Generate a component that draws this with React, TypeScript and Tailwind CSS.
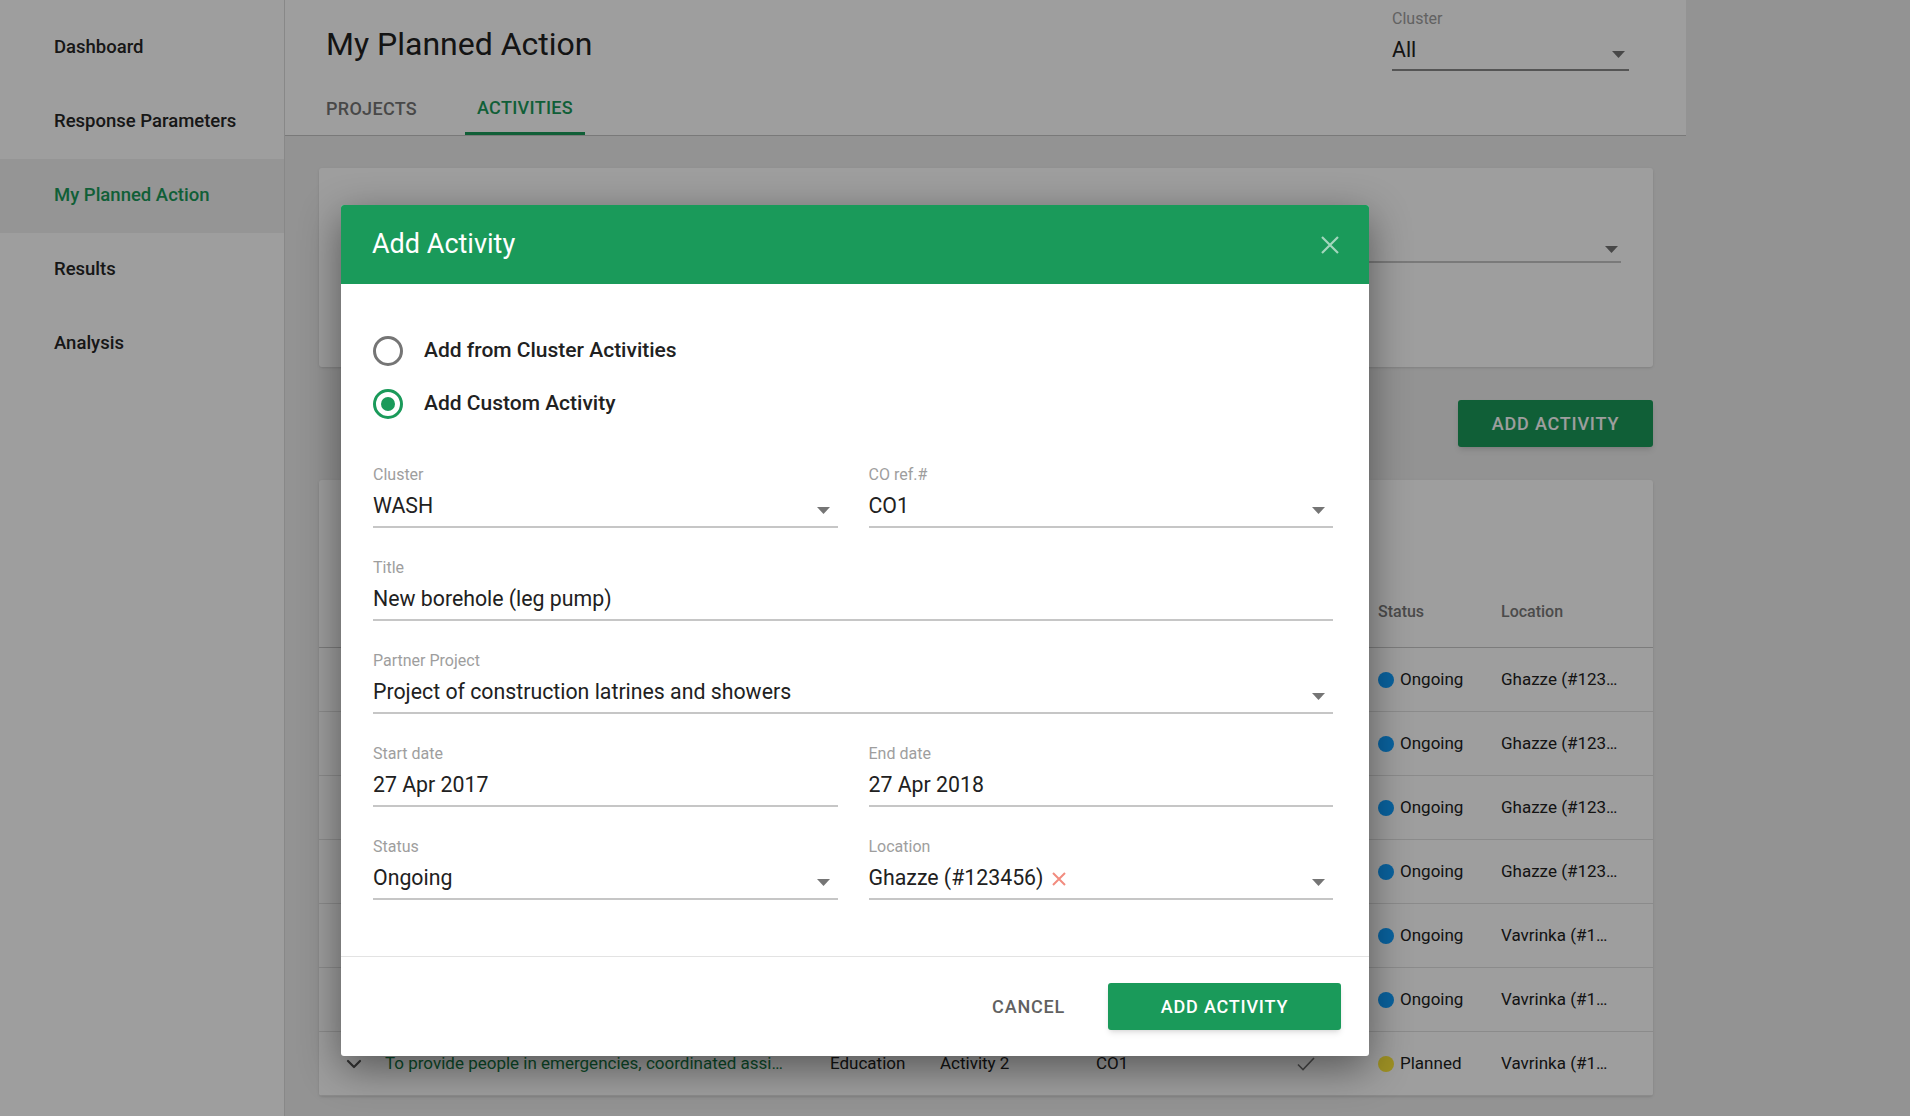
import { ChevronDown } from "lucide-react";

const navItems = ["Dashboard", "Response Parameters", "My Planned Action", "Results", "Analysis"];

// rows behind the modal only show status + location; the last one is fully visible
const rows = [
    { status: "Ongoing", location: "Ghazze (#123…" },
    { status: "Ongoing", location: "Ghazze (#123…" },
    { status: "Ongoing", location: "Ghazze (#123…" },
    { status: "Ongoing", location: "Ghazze (#123…" },
    { status: "Ongoing", location: "Vavrinka (#1…" },
    { status: "Ongoing", location: "Vavrinka (#1…" },
];

const cols = "grid grid-cols-[66px_445px_110px_156px_194px_88px_123px_1fr] items-center";

function Arrow({ right = "mr-[8px]", top = "mt-[8px]" }: { right?: string; top?: string }) {
    return (
        <svg width="13" height="7" viewBox="0 0 13 7" className={"ml-auto shrink-0 " + right + " " + top}>
            <path d="M0 0 L13 0 L6.5 7 Z" fill="#757575"/>
        </svg>
    );
}

function Field({ label, value, select, extra }: { label: string; value: string; select?: boolean; extra?: React.ReactNode }) {
    return (
        <div>
            <div className="h-[18px] leading-[18px] text-[16px] text-[#9e9e9e]">{label}</div>
            <div className="mt-[10px] pb-[8px] border-b-2 border-[#c6c6c6] flex items-center">
                <span className="h-[24px] leading-[24px] text-[21.3px] text-[#212121] whitespace-nowrap">{value}</span>
                {extra}
                {select && <Arrow/>}
            </div>
        </div>
    );
}

function Radio({ checked, label }: { checked?: boolean; label: string }) {
    return (
        <div className="h-[38px] flex items-center gap-[21px]">
            <div
                className={
                    checked
                        ? "w-[30px] h-[30px] rounded-full border-[3px] border-[#1a9a5a] flex items-center justify-center"
                        : "w-[30px] h-[30px] rounded-full border-[3px] border-[#757575]"
                }
            >
                {checked && <div className="w-[14px] h-[14px] rounded-full bg-[#1a9a5a]"/>}
            </div>
            <span className="text-[21px] font-medium text-[#212121]">{label}</span>
        </div>
    );
}

function StatusCell({ status }: { status: string }) {
    return (
        <div className="flex items-center gap-[6px]">
            <span
                className={
                    status === "Planned"
                        ? "w-[16px] h-[16px] rounded-full bg-[#fde93b]"
                        : "w-[16px] h-[16px] rounded-full bg-[#109eff]"
                }
            />
            {status}
        </div>
    );
}

export default function App() {
    return (
        <div className="relative h-screen w-full overflow-hidden bg-[#ededed] font-['Roboto',sans-serif] flex">
            {/* Sidebar */}
            <aside className="w-[285px] shrink-0 bg-white border-r border-[#dcdcdc] pt-[11px]">
                {navItems.map((item) => (
                    <div
                        key={item}
                        className={
                            item === "My Planned Action"
                                ? "h-[74px] flex items-center pl-[54px] text-[18.5px] font-medium text-[#1a9a5a] bg-[#f0f0f0]"
                                : "h-[74px] flex items-center pl-[54px] text-[18.5px] font-medium text-[#262626]"
                        }
                    >
                        {item}
                    </div>
                ))}
            </aside>

            <main className="w-[1401px] shrink-0 flex flex-col">
                {/* Header */}
                <header className="bg-white border-b border-[#c4c4c4] h-[136px]">
                    <div className="h-[79px] flex justify-between pl-[41px] pr-[57px]">
                        <h1 className="mt-[25px] h-[38px] leading-[38px] text-[32px] text-[#212121]">My Planned Action</h1>
                        <div className="mt-[10px] w-[237px]">
                            <div className="h-[18px] leading-[18px] text-[16px] text-[#9e9e9e]">Cluster</div>
                            <div className="mt-[10px] pb-[7px] border-b-2 border-[#8a8a8a] flex items-center">
                                <span className="h-[24px] leading-[24px] text-[21.3px] text-[#212121]">All</span>
                                <Arrow right="mr-[4px]"/>
                            </div>
                        </div>
                    </div>
                    <div className="h-[56px] flex pl-[41px]">
                        <div className="flex items-center pt-[2px] text-[18px] font-medium tracking-[0.3px] text-[#757575]">PROJECTS</div>
                        <div className="ml-[48px] px-[12px] pt-[3px] flex items-center border-b-[3px] border-[#1a9a5a] text-[18px] font-medium tracking-[0.3px] text-[#1a9a5a]">
                            ACTIVITIES
                        </div>
                    </div>
                </header>

                {/* Content */}
                <div className="pl-[34px] pr-[33px] pt-[32px]">
                    <div className="h-[199px] bg-white rounded-[3px] shadow-sm px-[32px] pt-[64px] flex justify-end">
                        <div className="w-[402px] h-[31px] border-b-2 border-[#c6c6c6] flex">
                            <Arrow right="mr-[3px]" top="mt-[14px]"/>
                        </div>
                    </div>

                    <div className="mt-[33px] flex justify-end">
                        <button className="h-[47px] w-[195px] bg-[#1a9a5a] rounded-[3px] shadow-md text-white text-[18px] font-medium tracking-[0.8px]">
                            ADD ACTIVITY
                        </button>
                    </div>

                    <div className="mt-[33px] bg-white rounded-[3px] shadow-sm">
                        <div className="h-[96px]"/>
                        <div className={cols + " h-[72px] border-b border-[#c8c8c8] text-[16px] font-medium text-[#7a7a7a]"}>
                            <div className="col-start-7">Status</div>
                            <div>Location</div>
                        </div>
                        {rows.map((r, i) => (
                            <div key={i} className={cols + " h-[64px] border-b border-[#e0e0e0] text-[17px] text-[#212121]"}>
                                <div className="col-start-7">
                                    <StatusCell status={r.status}/>
                                </div>
                                <div className="whitespace-nowrap">{r.location}</div>
                            </div>
                        ))}
                        <div className={cols + " h-[64px] border-b border-[#e0e0e0] text-[17px] text-[#212121]"}>
                            <div className="flex justify-center pl-[4px]">
                                <ChevronDown className="w-[24px] h-[24px] text-[#555555]" strokeWidth={2.2}/>
                            </div>
                            <div className="text-[#137a45] whitespace-nowrap">To provide people in emergencies, coordinated assi…</div>
                            <div>Education</div>
                            <div>Activity 2</div>
                            <div>CO1</div>
                            <div className="pl-[7px]">
                                <svg width="18" height="14" viewBox="0 0 18 14">
                                    <path d="M1 7.5 L6 12.5 L17 1" fill="none" stroke="#757575" strokeWidth="1.6"/>
                                </svg>
                            </div>
                            <StatusCell status="Planned"/>
                            <div className="whitespace-nowrap">Vavrinka (#1…</div>
                        </div>
                    </div>
                </div>
            </main>

            {/* Backdrop */}
            <div className="absolute inset-0 bg-[rgba(0,0,0,0.38)]"/>

            {/* Modal */}
            <div className="absolute left-[341px] top-[205px] w-[1028px] bg-white rounded-[3px] overflow-hidden shadow-[0_12px_40px_rgba(0,0,0,0.45)]">
                <div className="h-[79px] bg-[#1a9a5a] flex items-center justify-between pl-[31px] pr-[30px]">
                    <h2 className="text-[27px] text-white">Add Activity</h2>
                    <svg width="18" height="18" viewBox="0 0 18 18">
                        <path d="M1 1 L17 17 M17 1 L1 17" stroke="rgba(255,255,255,0.6)" strokeWidth="2.2"/>
                    </svg>
                </div>

                <div className="pt-[48px] pb-[56px] pl-[32px] pr-[36px]">
                    <div className="flex flex-col gap-[15px]">
                        <Radio label="Add from Cluster Activities"/>
                        <Radio checked label="Add Custom Activity"/>
                    </div>

                    <div className="mt-[43px] grid grid-cols-2 gap-x-[31px] gap-y-[31px]">
                        <Field label="Cluster" value="WASH" select/>
                        <Field label="CO ref.#" value="CO1" select/>
                        <div className="col-span-2">
                            <Field label="Title" value="New borehole (leg pump)"/>
                        </div>
                        <div className="col-span-2">
                            <Field label="Partner Project" value="Project of construction latrines and showers" select/>
                        </div>
                        <Field label="Start date" value="27 Apr 2017"/>
                        <Field label="End date" value="27 Apr 2018"/>
                        <Field label="Status" value="Ongoing" select/>
                        <Field
                            label="Location"
                            value="Ghazze (#123456)"
                            select
                            extra={
                                <svg width="14" height="14" viewBox="0 0 14 14" className="ml-[8px] mt-[2px]">
                                    <path d="M1 1 L13 13 M13 1 L1 13" stroke="#f28c7f" strokeWidth="2"/>
                                </svg>
                            }
                        />
                    </div>
                </div>

                <div className="border-t border-[#e3e3e3] flex justify-end items-center gap-[27px] pt-[26px] pb-[26px] pr-[28px]">
                    <button className="h-[47px] px-[16px] text-[18px] font-medium tracking-[0.8px] text-[#616161]">CANCEL</button>
                    <button className="h-[47px] w-[233px] bg-[#1a9a5a] rounded-[3px] shadow-md text-white text-[18px] font-medium tracking-[0.8px]">
                        ADD ACTIVITY
                    </button>
                </div>
            </div>
        </div>
    );
}
